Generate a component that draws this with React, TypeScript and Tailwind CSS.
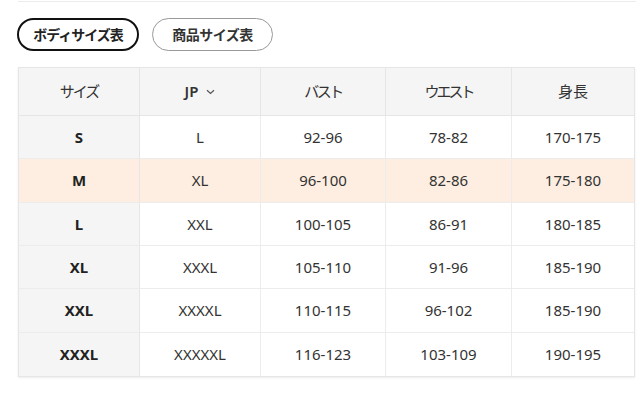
import React from "react";

const rows = [
  ["S", "L", "92-96", "78-82", "170-175"],
  ["M", "XL", "96-100", "82-86", "175-180"],
  ["L", "XXL", "100-105", "86-91", "180-185"],
  ["XL", "XXXL", "105-110", "91-96", "185-190"],
  ["XXL", "XXXXL", "110-115", "96-102", "185-190"],
  ["XXXL", "XXXXXL", "116-123", "103-109", "190-195"],
];

export default function App() {
  return (
    <div
      className="w-[640px] h-[412px] bg-white text-[#333] overflow-hidden"
      style={{ fontFamily: '"Noto Sans", "Noto Sans CJK JP", sans-serif' }}
    >
      <div className="ml-[18px] w-[618px] h-[2px] border-t border-[#ececec] mt-[1px]" />
      <div className="flex gap-[13px] ml-[17px] mt-[15px]">
        <button className="h-[33px] w-[122px] rounded-full border-2 border-[#111] text-[14px] font-bold text-[#222] tracking-[-1px] flex items-center justify-center">
          ボディサイズ表
        </button>
        <button className="h-[33px] w-[121px] rounded-full border border-[#999] text-[14px] font-bold text-[#333] tracking-[-0.5px] flex items-center justify-center">
          商品サイズ表
        </button>
      </div>
      <div className="ml-[18px] mt-[16px] w-[617px] border border-[#e6e6e6] shadow-[0_1px_2px_rgba(0,0,0,0.08)]">
        <div className="grid grid-cols-[121px_121px_125px_126px_122px] h-[48px] bg-[#f5f5f5] text-[15px] border-b border-[#e6e6e6]">
          <div className="flex items-center justify-center border-r border-[#e6e6e6] tracking-[-2px]">サイズ</div>
          <div className="flex items-center justify-center border-r border-[#e6e6e6] font-semibold gap-[8px]">
            JP
            <svg width="9" height="6" viewBox="0 0 9 6" fill="none">
              <path d="M1 1.2 L4.5 4.5 L8 1.2" stroke="#555" strokeWidth="1.2" />
            </svg>
          </div>
          <div className="flex items-center justify-center border-r border-[#e6e6e6] tracking-[-2.5px]">バスト</div>
          <div className="flex items-center justify-center border-r border-[#e6e6e6] tracking-[-3px]">ウエスト</div>
          <div className="flex items-center justify-center">身長</div>
        </div>
        {rows.map((r, i) => (
          <div
            key={i}
            className={`grid grid-cols-[121px_121px_125px_126px_122px] h-[43.33px] text-[15px] ${
              i < rows.length - 1 ? "border-b border-[#ececec]" : ""
            } ${r[0] === "M" ? "bg-[#fdeee1]" : "bg-white"}`}
          >
            <div
              className={`flex items-center justify-center font-bold text-[#222] border-r border-[#e6e6e6] ${
                r[0] === "M" ? "" : "bg-[#f5f5f5]"
              }`}
            >
              {r[0]}
            </div>
            <div className="flex items-center justify-center border-r border-[#ececec]">{r[1]}</div>
            <div className="flex items-center justify-center border-r border-[#ececec]">{r[2]}</div>
            <div className="flex items-center justify-center border-r border-[#ececec]">{r[3]}</div>
            <div className="flex items-center justify-center">{r[4]}</div>
          </div>
        ))}
      </div>
    </div>
  );
}
